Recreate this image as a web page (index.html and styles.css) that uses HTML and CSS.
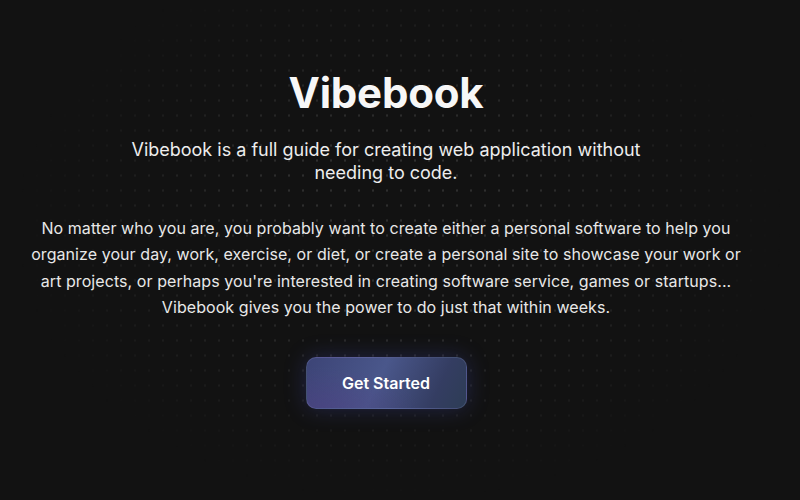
FILE: index.html
```html
<!DOCTYPE html>
<html lang="en">
<head>
<meta charset="UTF-8">
<title>Vibebook</title>
<link rel="stylesheet" href="styles.css">
</head>
<body>
<div class="page">
  <div class="dots"></div>
  <main class="hero">
    <h1 class="title">Vibebook</h1>
    <p class="lead">Vibebook is a full guide for creating web application without needing to code.</p>
    <p class="intro">No matter who you are, you probably want to create either a personal software to help you organize your day, work, exercise, or diet, or create a personal site to showcase your work or art projects, or perhaps you're interested in creating software service, games or startups... Vibebook gives you the power to do just that within weeks.</p>
    <button class="cta">Get Started</button>
  </main>
</div>
</body>
</html>
```

FILE: styles.css
```css
body {
  margin: 0;
  background-color: #121212;
  color: #f2f2f2;
  font-family: Inter, "Noto Sans", sans-serif;
  overflow: hidden;
}
.page {
  position: relative;
  min-height: 100vh;
}
/* dot grid, fading out toward the edges */
.dots {
  position: absolute;
  inset: 0;
  background-image: radial-gradient(circle, #2e2e2e 1px, transparent 1.3px);
  background-size: 14px 15px;
  background-position: 2px 3px;
  -webkit-mask-image: radial-gradient(ellipse 48% 55% at 50% 45%, #000 35%, transparent 100%);
  mask-image: radial-gradient(ellipse 48% 55% at 50% 45%, #000 35%, transparent 100%);
}
.hero {
  position: relative;
  display: flex;
  flex-direction: column;
  align-items: center;
  text-align: center;
  padding: 67px 28px 0 0;
}
.title {
  margin: 0;
  font-size: 42px;
  line-height: 52px;
  font-weight: 700;
  color: #f7f7f7;
  letter-spacing: -0.2px;
}
.lead {
  margin: 19px 0 0;
  max-width: 540px;
  font-size: 18px;
  line-height: 23px;
  color: #ededed;
}
.intro {
  margin: 31px 0 0;
  max-width: 716px;
  font-size: 16px;
  letter-spacing: 0.07px;
  line-height: 26.4px;
  color: #e8e8e8;
}
.cta {
  margin-top: 36px;
  width: 161px;
  height: 52px;
  border: 1px solid rgba(150, 160, 220, 0.2);
  border-radius: 10px;
  background:
    radial-gradient(ellipse 60% 80% at 10% 100%, rgba(80, 60, 130, 0.45), transparent),
    linear-gradient(115deg, #3c4476 0%, #4a578b 45%, #343d62 80%, #2d3d55 100%);
  color: #fff;
  font-family: Inter, sans-serif;
  font-size: 16px;
  font-weight: 600;
  box-shadow: 0 0 22px rgba(70, 80, 190, 0.3);
  cursor: pointer;
}
```
